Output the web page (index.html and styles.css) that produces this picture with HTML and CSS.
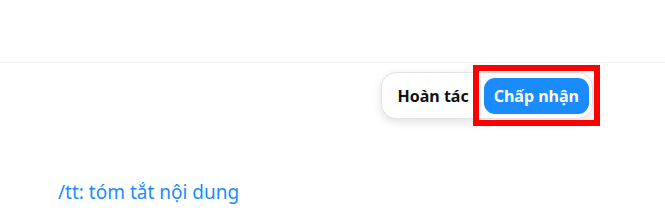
FILE: index.html
```html
<!DOCTYPE html>
<html lang="vi">
<head>
<meta charset="utf-8">
<title>Chấp nhận</title>
<meta name="viewport" content="width=device-width, initial-scale=1">
<link rel="stylesheet" href="styles.css">
</head>
<body>
<div class="top"></div>
<div class="bar">
  <div class="pill">
    <button class="btn undo">Hoàn tác</button>
    <button class="btn ok">Chấp nhận<span class="mark"></span></button>
  </div>
</div>
<div class="hint">/tt: tóm tắt nội dung</div>
</body>
</html>
```

FILE: styles.css
```css
html{font-family:"Noto Sans","Open Sans",Arial,sans-serif}
body{margin:0;padding:0;background:#fff}
.top{height:62px;border-bottom:1px solid #efefef}
.bar{display:flex;justify-content:flex-end;padding:9px 72px 0 0}
.pill{display:flex;align-items:center;gap:15px;padding:5px 3px 4px 3px;background:#fff;border:1px solid #e2e2e2;border-radius:15px;box-shadow:0 3px 10px rgba(0,0,0,.12)}
.btn{font-family:inherit;font-size:16px;font-weight:700;border:0;background:none;height:36px;padding:0 10px;border-radius:11px;cursor:pointer}
.undo{color:#111;padding:0 0 0 13px}
.ok{position:relative;background:#1a8cff;color:#fff}
.mark{position:absolute;top:-13px;left:-11px;right:-11px;bottom:-12px;border:6px solid #f00}
.hint{color:#1a8cff;font-size:19px;padding:60px 0 0 58px}
```
